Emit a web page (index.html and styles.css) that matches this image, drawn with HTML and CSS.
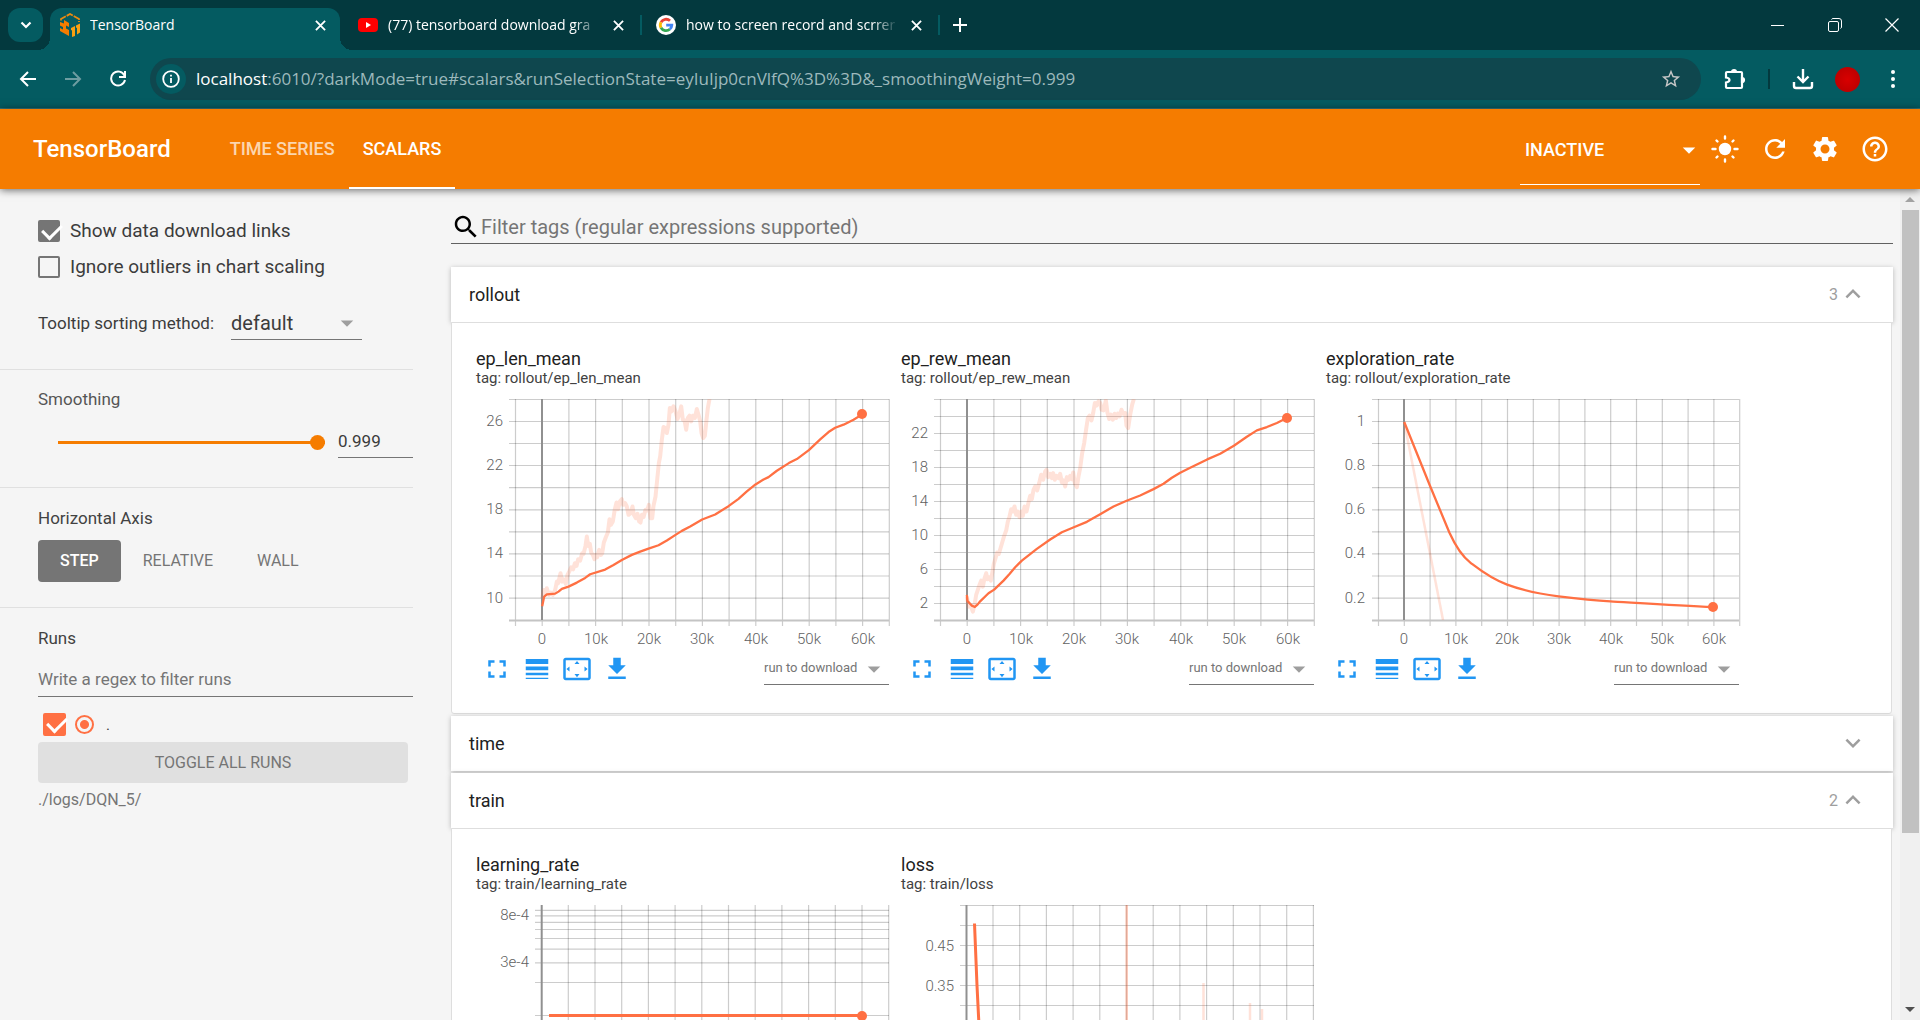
FILE: index.html
```html
<!DOCTYPE html>
<html lang="en">
<head>
<meta charset="utf-8">
<title>TensorBoard</title>
<link rel="stylesheet" href="styles.css">
</head>
<body>
<svg class="defs" aria-hidden="true">
  <symbol id="i-close" viewBox="0 0 12 12"><path d="M1 1l10 10M11 1L1 11" fill="none" stroke="currentColor" stroke-width="2"/></symbol>
  <symbol id="i-full" viewBox="0 0 24 24"><path d="M7 14H5v5h5v-2H7v-3zm-2-4h2V7h3V5H5v5zm12 7h-3v2h5v-5h-2v3zM14 5v2h3v3h2V5h-5z"/></symbol>
  <symbol id="i-weight" viewBox="0 0 24 24"><path d="M3 17h18v-2H3v2zm0 3h18v-1H3v1zm0-7h18v-3H3v3zm0-9v4h18V4H3z"/></symbol>
  <symbol id="i-fit" viewBox="0 0 24 24"><path d="M12.010 5.500L10 8h4l-1.990-2.500zM18 10v4l2.500-1.990L18 10zM6 10l-2.500 2.010L6 14v-4zm8 6h-4l2.010 2.500L14 16zm7-13H3c-1.100 0-2 .9-2 2v14c0 1.100.9 2 2 2h18c1.100 0 2-.9 2-2V5c0-1.100-.9-2-2-2zm0 16.010H3V4.990h18v14.020z"/></symbol>
  <symbol id="i-get" viewBox="0 0 24 24"><path d="M19 9h-4V3H9v6H5l7 7 7-7zM5 18v2h14v-2H5z"/></symbol>
  <symbol id="i-more" viewBox="0 0 24 24"><path d="M16.590 8.590L12 13.170 7.410 8.590 6 10l6 6 6-6z"/></symbol>
  <symbol id="i-less" viewBox="0 0 24 24"><path d="M12 8l-6 6 1.410 1.410L12 10.830l4.590 4.580L18 14z"/></symbol>
  <symbol id="i-drop" viewBox="0 0 24 24"><path d="M7 10l5 5 5-5z"/></symbol>
</svg>

<div class="tabstrip">
  <button class="tab-search" aria-label="Search tabs"><svg width="12" height="8" viewBox="0 0 12 8"><path d="M1.500 1.500L6 6l4.500-4.500" fill="none" stroke="currentColor" stroke-width="2.200"/></svg></button>
  <div class="tab active">
    <svg width="20" height="24" viewBox="0 0 20 24"><path d="M1 7.500v-1.500L10 1l9 5v3" fill="none" stroke="#e98a10" stroke-width="1.800" stroke-dasharray="7 1"/><path d="M0 9l4 1.500V7l5 3v4l-3-1.500v3l3 1.500v6l-9-5v-3l3 1.500V14l-3-1.500z" fill="#f57c00"/><path d="M11 15l4-2v10l-3 1v-7l-1 .5zM16 12.500l4-2v9l-3 2v-7l-1 .5z" fill="#f9a011"/></svg>
    <span class="tab-title">TensorBoard</span>
    <button class="tab-x" aria-label="Close tab"><svg width="11" height="11"><use href="#i-close"/></svg></button>
  </div>
  <div class="tab">
    <svg width="20" height="20" viewBox="0 0 20 20"><rect y="3" width="20" height="14" rx="4" fill="#f00"/><path d="M8 7l5 3-5 3z" fill="#fff"/></svg>
    <span class="tab-title fade">(77) tensorboard download gra</span>
    <button class="tab-x" aria-label="Close tab"><svg width="11" height="11"><use href="#i-close"/></svg></button>
  </div>
  <span class="tab-sep"></span>
  <div class="tab last">
    <svg width="20" height="20" viewBox="0 0 20 20"><circle cx="10" cy="10" r="10" fill="#fff"/><g fill="none" stroke-width="2.800"><path d="M14 5.800A5.800 5.800 0 0 0 5 7.200" stroke="#ea4335"/><path d="M5 7.200a5.800 5.800 0 0 0 0 5.600" stroke="#fbbc05"/><path d="M5 12.800a5.800 5.800 0 0 0 8.800 1.500" stroke="#34a853"/><path d="M13.800 14.300a5.800 5.800 0 0 0 2-4.100H10.200" stroke="#4285f4"/></g></svg>
    <span class="tab-title fade">how to screen record and scrrer</span>
    <button class="tab-x" aria-label="Close tab"><svg width="11" height="11"><use href="#i-close"/></svg></button>
  </div>
  <span class="tab-sep"></span>
  <button class="new-tab" aria-label="New tab"><svg width="14" height="14" viewBox="0 0 14 14"><path d="M7 0v14M0 7h14" stroke="currentColor" stroke-width="2"/></svg></button>
  <div class="window-controls">
    <button aria-label="Minimize"><svg width="14" height="14" viewBox="0 0 14 14"><path d="M0 7.500h13" stroke="currentColor"/></svg></button>
    <button aria-label="Restore"><svg width="14" height="14" viewBox="0 0 14 14" fill="none" stroke="currentColor"><rect x=".5" y="3.500" width="10" height="10" rx="1.500"/><path d="M3.500 1.500q.5-1 1.500-1h6q2.500 0 2.500 2.500v6q0 1-1 1.500"/></svg></button>
    <button aria-label="Close"><svg width="14" height="14" viewBox="0 0 14 14"><path d="M.5.500l13 13M13.500.500l-13 13" stroke="currentColor" stroke-width="1.200"/></svg></button>
  </div>
</div>

<div class="toolbar">
  <button aria-label="Back"><svg width="18" height="18" viewBox="0 0 18 18" fill="none" stroke="currentColor" stroke-width="2"><path d="M17 9H2.500M9 2L2 9l7 7"/></svg></button>
  <button class="dim" aria-label="Forward"><svg width="18" height="18" viewBox="0 0 18 18" fill="none" stroke="currentColor" stroke-width="2"><path d="M1 9h14.500M9 2l7 7-7 7"/></svg></button>
  <button aria-label="Reload"><svg width="18" height="18" viewBox="0 0 18 18" fill="none" stroke="currentColor" stroke-width="2"><path d="M15.500 5.500A7 7 0 1 0 16 10M16 1v6h-6"/></svg></button>
  <div class="omnibox">
    <button class="site-info" aria-label="Site information"><svg width="18" height="18" viewBox="0 0 18 18" fill="none" stroke="currentColor" stroke-width="1.800"><circle cx="9" cy="9" r="7.800"/><path d="M9 8v5M9 4.800v1.800"/></svg></button>
    <span class="url"><b>localhost</b>:6010/?darkMode=true#scalars&amp;runSelectionState=eyIuIjp0cnVlfQ%3D%3D&amp;_smoothingWeight=0.999</span>
    <button class="star" aria-label="Bookmark"><svg width="22" height="22" viewBox="0 0 24 24"><path fill="currentColor" d="M22 9.240l-7.190-.62L12 2 9.190 8.630 2 9.240l5.460 4.730L5.820 21 12 17.270 18.180 21l-1.630-7.030L22 9.240zM12 15.400l-3.760 2.270 1-4.280-3.320-2.880 4.380-.38L12 6.100l1.710 4.040 4.380.38-3.320 2.880 1 4.280L12 15.400z"/></svg></button>
  </div>
  <div class="toolbar-end">
    <button aria-label="Extensions"><svg width="22" height="22" viewBox="0 0 22 22" fill="none" stroke="currentColor" stroke-width="2.200"><path d="M2 5q0-1 1-1h14q1 0 1 1v14q0 1-1 1H3q-1 0-1-1v-4.500q3.500-.5 3.500-2.500T2 9.500z"/><path d="M8 4a2 2 0 0 1 4 0zM18 10a2 2 0 0 1 0 4z" fill="currentColor"/></svg></button>
    <span class="bar-sep"></span>
    <button aria-label="Downloads"><svg width="22" height="22" viewBox="0 0 22 22" fill="none" stroke="currentColor" stroke-width="2.400"><path d="M11 1v13M5.500 8.500L11 14l5.500-5.500M2 14v4q0 2 2 2h14q2 0 2-2v-4"/></svg></button>
    <button class="profile" aria-label="Profile"></button>
    <button aria-label="Menu"><svg width="4" height="20" viewBox="0 0 4 20" fill="currentColor"><circle cx="2" cy="3" r="2"/><circle cx="2" cy="10" r="2"/><circle cx="2" cy="17" r="2"/></svg></button>
  </div>
</div>

<header class="app-header">
  <h1>TensorBoard</h1>
  <nav>
    <a href="#timeseries">TIME SERIES</a>
    <a href="#scalars" class="current">SCALARS</a>
  </nav>
  <div class="plugin-select">
    <select aria-label="Inactive plugins"><option>INACTIVE</option></select>
    <svg width="30" height="30"><use href="#i-drop"/></svg>
  </div>
  <div class="header-actions">
    <button aria-label="Theme"><svg width="28" height="28" viewBox="0 0 28 28" fill="currentColor" stroke="currentColor" stroke-width="2.400" stroke-linecap="round"><circle cx="14" cy="14" r="5"/><path d="M14 1.500v2M14 24.500v2M1.500 14h3M23.500 14h3M5.500 5.500l1 1M21.500 21.500l1 1M22.500 5.500l-1 1M6.500 21.500l-1 1"/></svg></button>
    <button aria-label="Reload data"><svg width="30" height="30" viewBox="0 0 24 24" fill="currentColor"><path d="M17.650 6.350C16.200 4.900 14.210 4 12 4c-4.420 0-7.990 3.580-7.990 8s3.570 8 7.990 8c3.730 0 6.840-2.550 7.730-6h-2.080c-.82 2.330-3.040 4-5.650 4-3.310 0-6-2.690-6-6s2.690-6 6-6c1.660 0 3.140.69 4.220 1.780L13 11h7V4l-2.350 2.350z"/></svg></button>
    <button aria-label="Settings"><svg width="30" height="30" viewBox="0 0 24 24" fill="currentColor"><path d="M19.140 12.940c.04-.3.06-.61.06-.94 0-.32-.02-.64-.07-.94l2.030-1.580c.18-.14.23-.41.12-.61l-1.920-3.320c-.12-.22-.37-.29-.59-.22l-2.390.96c-.5-.38-1.030-.7-1.620-.94l-.36-2.540c-.04-.24-.24-.41-.48-.41h-3.840c-.24 0-.43.17-.47.41l-.36 2.540c-.59.24-1.130.57-1.620.94l-2.390-.96c-.22-.08-.47 0-.59.22L2.740 8.870c-.12.21-.08.47.12.61l2.030 1.580c-.05.3-.09.63-.09.94s.02.64.07.94l-2.030 1.580c-.18.14-.23.41-.12.61l1.920 3.320c.12.22.37.29.59.22l2.390-.96c.5.38 1.030.7 1.620.94l.36 2.540c.05.24.24.41.48.41h3.840c.24 0 .44-.17.47-.41l.36-2.540c.59-.24 1.130-.56 1.620-.94l2.390.96c.22.08.47 0 .59-.22l1.920-3.320c.12-.22.07-.47-.12-.61l-2.010-1.580zM12 15.600c-1.980 0-3.600-1.620-3.600-3.600s1.620-3.600 3.600-3.600 3.600 1.620 3.600 3.600-1.620 3.600-3.600 3.600z"/></svg></button>
    <button aria-label="Help"><svg width="30" height="30" viewBox="0 0 24 24" fill="currentColor"><path d="M11 18h2v-2h-2v2zm1-16C6.480 2 2 6.480 2 12s4.480 10 10 10 10-4.480 10-10S17.520 2 12 2zm0 18c-4.410 0-8-3.590-8-8s3.590-8 8-8 8 3.590 8 8-3.590 8-8 8zm0-14c-2.210 0-4 1.790-4 4h2c0-1.100.9-2 2-2s2 .9 2 2c0 2-3 1.750-3 5h2c0-2.250 3-2.500 3-5 0-2.210-1.790-4-4-4z"/></svg></button>
  </div>
</header>

<div class="workspace">
  <aside class="sidebar">
    <section class="options">
      <label class="check-row"><input type="checkbox" class="check" checked>Show data download links</label>
      <label class="check-row"><input type="checkbox" class="check">Ignore outliers in chart scaling</label>
      <div class="tooltip-row">
        <label for="sorting">Tooltip sorting method:</label>
        <div class="underline-select">
          <select id="sorting"><option>default</option></select>
          <svg width="30" height="30"><use href="#i-drop"/></svg>
        </div>
      </div>
    </section>
    <section class="smoothing">
      <label for="smooth">Smoothing</label>
      <div class="smooth-row">
        <input type="range" id="smooth" min="0" max="999" value="999">
        <input type="text" class="smooth-value" aria-label="Smoothing value" value="0.999">
      </div>
    </section>
    <section class="axis">
      <h3>Horizontal Axis</h3>
      <div class="axis-buttons">
        <button class="on">STEP</button><button>RELATIVE</button><button>WALL</button>
      </div>
    </section>
    <section class="runs">
      <h3>Runs</h3>
      <input type="text" class="regex" aria-label="Filter runs" placeholder="Write a regex to filter runs">
      <div class="run-row">
        <input type="checkbox" class="check run" id="run-root" checked>
        <input type="radio" class="run-only" aria-label="Only this run" checked>
        <label for="run-root">.</label>
      </div>
      <button class="toggle">TOGGLE ALL RUNS</button>
      <p>./logs/DQN_5/</p>
    </section>
  </aside>

  <main>
    <div class="tag-filter">
      <svg width="30" height="30" viewBox="0 0 24 24"><path d="M15.500 14h-.79l-.28-.27C15.410 12.590 16 11.110 16 9.500 16 5.910 13.090 3 9.500 3S3 5.910 3 9.500 5.910 16 9.500 16c1.610 0 3.090-.59 4.230-1.570l.27.28v.79l5 4.990L20.490 19l-4.990-5zm-6 0C7.010 14 5 11.990 5 9.500S7.010 5 9.500 5 14 7.010 14 9.500 11.990 14 9.500 14z"/></svg>
      <input type="text" aria-label="Filter tags" placeholder="Filter tags (regular expressions supported)">
    </div>

    <section class="group">
      <button class="group-head"><span>rollout</span><span class="count">3</span><svg width="30" height="30"><use href="#i-less"/></svg></button>
      <div class="group-body">
        <article class="card">
          <h2>ep_len_mean</h2>
          <p>tag: rollout/ep_len_mean</p>
          <svg class="chart" width="414" height="252" viewBox="0 0 414 252">
            <path class="grid" d="M39.500 0v227m26.700-227v227m26.700-227v227m26.700-227v227m26.700-227v227m26.700-227v227m26.700-227v227m26.700-227v227m26.700-227v227m26.700-227v227m26.700-227v227m26.700-227v227m26.700-227v227m26.700-227v227m26.700-227v227"/>
            <path class="grid" d="M33 .5h380m-380 22h380m-380 22h380m-380 22h380m-380 22.200h380m-380 22.100h380m-380 22.100h380m-380 22h380m-380 22.100h380m-380 22.100h380"/>
            <path class="base" d="M33 221.500h380"/>
            <path class="zero" d="M66 0v221"/>
            <svg x="39.500" y="0" width="373.700" height="221" viewBox="226 178 1121 662" preserveAspectRatio="none">
              <polyline class="raw noisy" points="306,775 311,750 315,762 320,745 326,765 332,758 338,765 345,750 350,725 354,730 361,700 366,725 371,718 377,732 382,705 387,695 393,682 399,688 404,670 409,678 414,658 420,662 426,640 430,642 436,618 440,590 444,618 449,612 453,638 458,645 463,658 467,645 471,652 477,630 482,645 486,640 491,608 497,592 503,578 508,538 512,555 518,545 524,508 529,488 534,508 539,485 545,478 549,495 555,490 560,500 565,525 571,520 577,500 581,525 587,535 592,522 597,545 601,548 605,525 610,532 616,510 621,512 626,495 631,535 636,535 640,498 646,470 650,430 656,370 660,350 665,300 670,262 675,265 680,280 685,255 689,205 694,215 700,200 706,215 712,238 718,222 723,200 728,240 733,242 738,270 743,235 748,228 753,245 758,228 764,235 770,208 775,225 780,245 784,280 789,295 794,288 799,240 803,205 808,178"/>
              <polyline class="line" points="306,799 312,770 320,763 345,761 355,755 365,747 385,740 410,728 435,714 450,703 495,689 520,675 545,660 575,645 600,635 625,626 655,616 680,602 706,585 725,573 750,560 786,539 825,524 865,499 895,477 920,455 946,434 970,419 985,412 1010,393 1046,370 1070,358 1106,331 1140,299 1165,277 1185,264 1210,255 1240,240 1266,224"/>
            </svg>
            <circle class="dot" cx="386" cy="15" r="5"/>
            <g class="y"><text x="27" y="27">26</text><text x="27" y="71">22</text><text x="27" y="115">18</text><text x="27" y="159">14</text><text x="27" y="204">10</text></g>
            <g class="x"><text x="66" y="245">0</text><text x="120" y="245">10k</text><text x="173" y="245">20k</text><text x="226" y="245">30k</text><text x="280" y="245">40k</text><text x="333" y="245">50k</text><text x="387" y="245">60k</text></g>
          </svg>
          <div class="card-tools">
            <button aria-label="Toggle size"><svg width="30" height="30"><use href="#i-full"/></svg></button>
            <button aria-label="Toggle log axis"><svg width="30" height="30"><use href="#i-weight"/></svg></button>
            <button aria-label="Fit domain"><svg width="30" height="30"><use href="#i-fit"/></svg></button>
            <button aria-label="Download"><svg width="30" height="30"><use href="#i-get"/></svg></button>
            <div class="underline-select small"><select aria-label="Run to download"><option>run to download</option></select><svg width="30" height="30"><use href="#i-drop"/></svg></div>
          </div>
        </article>

        <article class="card">
          <h2>ep_rew_mean</h2>
          <p>tag: rollout/ep_rew_mean</p>
          <svg class="chart" width="414" height="252" viewBox="0 0 414 252">
            <path class="grid" d="M39.500 0v227m26.700-227v227m26.700-227v227m26.700-227v227m26.700-227v227m26.700-227v227m26.700-227v227m26.700-227v227m26.700-227v227m26.700-227v227m26.700-227v227m26.700-227v227m26.700-227v227m26.700-227v227m26.700-227v227"/>
            <path class="grid" d="M33 .5h380m-380 17h380m-380 17h380m-380 17h380m-380 17h380m-380 17h380m-380 17h380m-380 17h380m-380 17h380m-380 17h380m-380 17h380m-380 17h380m-380 17h380"/>
            <path class="base" d="M33 221.500h380"/>
            <path class="zero" d="M66 0v221"/>
            <svg x="39.500" y="0" width="373.700" height="221" viewBox="211 178 1121 662" preserveAspectRatio="none">
              <polyline class="raw noisy" points="290,770 296,800 302,798 308,815 313,795 318,765 323,750 328,735 333,722 338,740 343,715 348,700 352,718 358,712 362,722 367,695 371,672 376,655 381,638 386,642 391,625 397,605 402,588 408,572 413,545 418,530 423,508 428,515 433,500 438,525 443,515 448,532 454,515 458,528 463,500 469,515 475,488 480,468 485,478 490,450 495,440 501,452 507,430 513,405 519,420 525,395 529,390 534,412 540,402 545,415 549,400 554,420 559,408 565,415 570,402 575,428 580,422 585,440 590,412 595,420 600,408 605,418 609,398 614,430 620,442 625,410 630,385 636,340 642,310 648,268 653,235 658,228 664,242 669,220 674,190 679,198 685,185 690,190 694,210 700,212 707,182 712,220 717,238 722,225 728,240 733,222 738,235 743,222 748,230 754,210 759,222 765,220 769,258 774,265 780,225 786,195 791,178"/>
              <polyline class="line" points="290,765 292,783 305,797 314,801 322,794 330,784 355,760 372,749 400,722 418,702 435,682 455,662 500,627 540,599 575,577 611,562 650,546 690,523 730,500 771,482 810,467 850,448 880,432 905,414 930,399 960,384 1011,359 1050,342 1091,318 1130,291 1160,272 1190,262 1220,250 1250,235"/>
            </svg>
            <circle class="dot" cx="386" cy="19" r="5"/>
            <g class="y"><text x="27" y="39">22</text><text x="27" y="73">18</text><text x="27" y="107">14</text><text x="27" y="141">10</text><text x="27" y="175">6</text><text x="27" y="209">2</text></g>
            <g class="x"><text x="66" y="245">0</text><text x="120" y="245">10k</text><text x="173" y="245">20k</text><text x="226" y="245">30k</text><text x="280" y="245">40k</text><text x="333" y="245">50k</text><text x="387" y="245">60k</text></g>
          </svg>
          <div class="card-tools">
            <button aria-label="Toggle size"><svg width="30" height="30"><use href="#i-full"/></svg></button>
            <button aria-label="Toggle log axis"><svg width="30" height="30"><use href="#i-weight"/></svg></button>
            <button aria-label="Fit domain"><svg width="30" height="30"><use href="#i-fit"/></svg></button>
            <button aria-label="Download"><svg width="30" height="30"><use href="#i-get"/></svg></button>
            <div class="underline-select small"><select aria-label="Run to download"><option>run to download</option></select><svg width="30" height="30"><use href="#i-drop"/></svg></div>
          </div>
        </article>

        <article class="card">
          <h2>exploration_rate</h2>
          <p>tag: rollout/exploration_rate</p>
          <svg class="chart" width="414" height="252" viewBox="0 0 414 252">
            <path class="grid" d="M52.500 0v227m25.800-227v227m25.800-227v227m25.800-227v227m25.800-227v227m25.800-227v227m25.800-227v227m25.800-227v227m25.800-227v227m25.800-227v227m25.800-227v227m25.800-227v227m25.800-227v227m25.800-227v227m25.800-227v227"/>
            <path class="grid" d="M46 .5h367m-367 22h367m-367 22h367m-367 22h367m-367 22.200h367m-367 22.100h367m-367 22.100h367m-367 22h367m-367 22.100h367m-367 22.100h367"/>
            <path class="base" d="M46 221.500h367"/>
            <path class="zero" d="M78 0v221"/>
            <svg x="52.500" y="0" width="361" height="221" viewBox="198 178 912 662" preserveAspectRatio="none">
              <path class="raw" d="M263 247L361 840"/>
              <path class="line" d="M263 247L327 435 377 578C395 625 410 650 430 668S480 715 523 734 620 764 653 769C700 776 750 782 784 784S950 797 1044 801"/>
            </svg>
            <circle class="dot" cx="387" cy="208" r="5"/>
            <g class="y"><text x="39" y="27">1</text><text x="39" y="71">0.8</text><text x="39" y="115">0.6</text><text x="39" y="159">0.4</text><text x="39" y="204">0.2</text></g>
            <g class="x"><text x="78" y="245">0</text><text x="130" y="245">10k</text><text x="181" y="245">20k</text><text x="233" y="245">30k</text><text x="285" y="245">40k</text><text x="336" y="245">50k</text><text x="388" y="245">60k</text></g>
          </svg>
          <div class="card-tools">
            <button aria-label="Toggle size"><svg width="30" height="30"><use href="#i-full"/></svg></button>
            <button aria-label="Toggle log axis"><svg width="30" height="30"><use href="#i-weight"/></svg></button>
            <button aria-label="Fit domain"><svg width="30" height="30"><use href="#i-fit"/></svg></button>
            <button aria-label="Download"><svg width="30" height="30"><use href="#i-get"/></svg></button>
            <div class="underline-select small"><select aria-label="Run to download"><option>run to download</option></select><svg width="30" height="30"><use href="#i-drop"/></svg></div>
          </div>
        </article>
      </div>
    </section>

    <section class="group">
      <button class="group-head"><span>time</span><span class="count"></span><svg width="30" height="30"><use href="#i-more"/></svg></button>
    </section>

    <section class="group">
      <button class="group-head"><span>train</span><span class="count">2</span><svg width="30" height="30"><use href="#i-less"/></svg></button>
      <div class="group-body">
        <article class="card">
          <h2>learning_rate</h2>
          <p>tag: train/learning_rate</p>
          <svg class="chart" width="414" height="252" viewBox="0 0 414 252">
            <path class="grid" d="M92.300 0v227m26.700-227v227m26.700-227v227m26.700-227v227m26.700-227v227m26.700-227v227m26.700-227v227m26.700-227v227m26.700-227v227m26.700-227v227m26.700-227v227m26.700-227v227m26.700-227v227"/>
            <path class="grid" d="M59 5.300h354m-354 5.500h354m-354 6.500h354m-354 7.200h354m-354 9h354m-354 10.700h354m-354 13.600h354m-354 19.700h354m-354 33h354"/>
            <path class="zero" d="M65.700 0v221"/>
            <path class="line thick" d="M73 110.500h313"/>
            <circle class="dot" cx="386" cy="111" r="5"/>
            <g class="y"><text x="53" y="15">8e-4</text><text x="53" y="62">3e-4</text></g>
          </svg>
        </article>

        <article class="card">
          <h2>loss</h2>
          <p>tag: train/loss</p>
          <svg class="chart" width="414" height="252" viewBox="0 0 414 252">
            <path class="grid" d="M92 0v227m26.700-227v227m26.700-227v227m26.700-227v227m26.700-227v227m26.700-227v227m26.700-227v227m26.700-227v227m26.700-227v227m26.700-227v227m26.700-227v227m26.700-227v227m26.700-227v227"/>
            <path class="grid" d="M59 .5h354m-354 20h354m-354 20h354m-354 20h354m-354 20h354m-354 20h354m-354 20h354"/>
            <path class="zero" d="M65.500 0v221"/>
            <path class="raw" d="M225.700 0v221M302.500 78v140M349 98v120M361 104v120"/>
            <path class="raw" d="M225.700 0v221"/>
            <path class="line thick" d="M73.500 18.500l2.500 62 3 60"/>
            <g class="y"><text x="53" y="46">0.45</text><text x="53" y="86">0.35</text><text x="53" y="126">0.25</text></g>
          </svg>
        </article>
      </div>
    </section>
  </main>

  <div class="scrollbar" aria-hidden="true">
    <svg width="10" height="5" viewBox="0 0 10 5"><path d="M0 5l5-5 5 5z" fill="#a3a3a3"/></svg>
    <span class="track"><span class="thumb"></span></span>
    <svg width="10" height="5" viewBox="0 0 10 5"><path d="M0 0l5 5 5-5z" fill="#505050"/></svg>
  </div>
</div>
</body>
</html>
```
FILE: styles.css
```css
* { box-sizing: border-box; }
body {
  margin: 0;
  height: 100vh;
  display: flex;
  flex-direction: column;
  overflow: hidden;
  background: #f5f5f5;
  color: #212121;
  font-family: Roboto, sans-serif;
}
h1, h2, h3, p { margin: 0; font-weight: 400; }
button, input, select { font: inherit; color: inherit; border: 0; padding: 0; margin: 0; background: none; border-radius: 0; outline: 0; }
button { display: flex; align-items: center; justify-content: center; }
select { appearance: none; }
svg { display: block; flex: none; }
.defs { position: absolute; width: 0; height: 0; }

/* browser tabs */
.tabstrip {
  flex: none;
  display: flex;
  align-items: center;
  height: 50px;
  padding-left: 8px;
  background: #03393e;
  color: #fff;
  font-family: "Open Sans", sans-serif;
  font-size: 14px;
}
.tab-search { width: 35px; height: 34px; margin-right: 7px; border-radius: 12px; background: #045b61; }
.tab { display: flex; align-items: center; gap: 10px; width: 290px; height: 42px; padding: 0 4px 8px 18px; align-self: flex-end; }
.tab.active { position: relative; padding: 0 12px 8px 10px; border-radius: 12px 12px 0 0; background: #045b61; }
.tab.active::before, .tab.active::after { content: ""; position: absolute; bottom: 0; width: 12px; height: 12px; }
.tab.active::before { left: -12px; background: radial-gradient(circle at 0 0, transparent 12px, #045b61 12px); }
.tab.active::after { right: -12px; background: radial-gradient(circle at 100% 0, transparent 12px, #045b61 12px); }
.tab.last { width: 286px; padding-left: 14px; }
.tab-title { flex: 1; min-width: 0; overflow: hidden; white-space: nowrap; line-height: 20px; }
.fade { -webkit-mask-image: linear-gradient(to right, #000 88%, transparent); mask-image: linear-gradient(to right, #000 88%, transparent); }
.tab-x { width: 16px; height: 16px; }
.tab-sep { width: 2px; height: 20px; background: #045b61; margin-left: 10px; }
.new-tab { width: 40px; height: 34px; }
.window-controls { display: flex; margin-left: auto; }
.window-controls button { width: 57px; height: 50px; }

/* browser toolbar */
.toolbar {
  flex: none;
  display: flex;
  align-items: center;
  height: 59px;
  padding: 0 14px 0 5px;
  background: #045b61;
  border-bottom: 1px solid #397579;
  color: #fff;
}
.toolbar > button { width: 45px; height: 40px; }
.toolbar .dim { color: #6e9da1; }
.omnibox { flex: 1; min-width: 0; display: flex; align-items: center; height: 42px; margin-left: 10px; padding: 0 19px 0 6px; border-radius: 21px; background: #0f474e; }
.site-info { width: 30px; height: 30px; border-radius: 50%; background: #045b61; }
.url { flex: 1; min-width: 0; overflow: hidden; white-space: nowrap; margin-left: 10px; font: 17px/24px "Open Sans", sans-serif; color: #9db9bc; }
.url b { font-weight: 400; color: #fff; }
.star { color: #c7c7c7; }
.toolbar-end { display: flex; align-items: center; margin-left: 23px; }
.bar-sep { width: 2px; height: 20px; margin: 0 22px; background: #03393e; }
.profile { width: 25px; height: 25px; margin: 0 20px 0 21px; border-radius: 50%; background: radial-gradient(#d80000, #b40000); }
.toolbar-end button:last-child { width: 26px; }

/* app header */
.app-header {
  position: relative;
  z-index: 2;
  flex: none;
  display: flex;
  align-items: center;
  height: 80px;
  padding: 0 20px 0 33px;
  background: #f57c00;
  color: #fff;
  box-shadow: 0 1px 8px rgba(0, 0, 0, .6);
}
.app-header h1 { font-size: 24px; font-weight: 500; line-height: 32px; }
.app-header nav { display: flex; align-self: stretch; margin-left: 45px; }
.app-header nav a { display: flex; align-items: center; padding: 0 14px; border-bottom: 2px solid transparent; color: rgba(255, 255, 255, .7); font-size: 18px; font-weight: 500; text-decoration: none; }
.app-header nav a.current { color: #fff; border-color: #fff; }
.plugin-select { display: flex; align-items: center; width: 180px; height: 70px; margin-left: auto; padding-left: 5px; border-bottom: 1px solid #fff; align-self: flex-start; margin-top: 6px; }
.plugin-select select { flex: 1; font-size: 18px; font-weight: 500; }
.plugin-select svg, .underline-select svg { fill: currentColor; pointer-events: none; }
.plugin-select svg { margin-right: -4px; }
.header-actions { display: flex; }
.header-actions button { width: 50px; height: 50px; }

.workspace { flex: 1; min-height: 0; display: flex; }

/* sidebar */
.sidebar { flex: none; width: 413px; color: #3c3c3c; font-size: 17px; line-height: 24px; }
.sidebar section { padding-left: 38px; border-bottom: 1px solid #e0e0e0; }
.sidebar section:last-child { border-bottom: 0; }
.sidebar h3 { font-size: 17px; color: #424242; }
.check-row { display: flex; align-items: center; gap: 10px; height: 36px; font-size: 19px; }
.check { appearance: none; position: relative; flex: none; width: 22px; height: 22px; border: 2px solid #757575; border-radius: 2px; }
.check:checked { background: #757575; }
.check:checked::after { content: ""; position: absolute; left: 6px; top: -2px; width: 9px; height: 16px; border: solid #fff; border-width: 0 3px 3px 0; transform: rotate(45deg); }
.options { height: 181px; padding-top: 24px; }
.tooltip-row { display: flex; align-items: center; gap: 17px; height: 40px; margin-top: 18px; }
.underline-select { display: flex; align-items: center; width: 131px; height: 34px; border-bottom: 1px solid #757575; }
.underline-select select { flex: 1; min-width: 0; font-size: 20px; }
.underline-select svg { color: #9e9e9e; }
.smoothing { height: 118px; padding-top: 17px; }
.smoothing label { display: block; color: #555; }
.smooth-row { display: flex; align-items: center; gap: 13px; height: 32px; margin-top: 15px; padding-left: 20px; }
.smooth-row input[type=range] { appearance: none; flex: 1; min-width: 0; height: 15px; background: linear-gradient(#f57c00, #f57c00) center / 100% 3px no-repeat; }
.smooth-row input::-webkit-slider-thumb { appearance: none; width: 15px; height: 15px; border-radius: 50%; background: #f57c00; }
.smooth-value { width: 75px; height: 32px; padding-bottom: 2px; border-bottom: 1px solid #757575; }
.axis { height: 120px; padding-top: 18px; }
.axis-buttons { display: flex; margin-top: 10px; }
.axis-buttons button { height: 42px; padding: 0 22px; border-radius: 4px; color: #757575; font-size: 16px; }
.axis-buttons .on { background: #757575; color: #fff; font-weight: 500; }
.runs { padding-top: 18px; }
.regex { display: block; width: 375px; height: 34px; margin-top: 13px; padding-bottom: 2px; border-bottom: 1px solid #757575; }
.regex::placeholder, .tag-filter input::placeholder { color: #757575; opacity: 1; }
.run-row { display: flex; align-items: center; gap: 9px; height: 29px; margin: 13px 0 3px; padding-left: 5px; }
.check.run { border-color: #ff7043; background: #ff7043; width: 23px; height: 23px; }
.run-only { appearance: none; width: 19px; height: 19px; border: 2px solid #ff7043; border-radius: 50%; background: radial-gradient(#ff7043 4px, transparent 5px); }
.run-row label { margin-left: 3px; font-size: 15px; }
.toggle { width: 370px; height: 41px; border-radius: 4px; background: #e0e0e0; color: #757575; font-size: 16px; }
.runs p { margin-top: 5px; color: #757575; font-size: 16px; }

/* main column */
main { flex: 1; min-width: 0; overflow: hidden; padding: 21px 7px 0 38px; }
.tag-filter { display: flex; align-items: center; height: 34px; margin-bottom: 23px; border-bottom: 1px solid #616161; }
.tag-filter input { flex: 1; font-size: 20px; }
.group { margin-bottom: 2px; }
.group-head {
  position: relative;
  width: 100%;
  height: 55px;
  padding: 0 25px 1px 18px;
  background: #fff;
  font-size: 18px;
  box-shadow: 0 1px 5px rgba(0, 0, 0, .25);
}
.group-head svg { fill: #9e9e9e; }
.count { margin-left: auto; font-size: 16px; color: #9e9e9e; }
.group-body { position: relative; display: flex; flex-wrap: wrap; gap: 11px; margin-right: 1px; padding: 26px 24px; background: #fff; border: 1px solid #dedede; border-radius: 0 0 3px 3px; }
.card { width: 414px; }
.card h2 { font-size: 18px; line-height: 20px; }
.card p { font-size: 15px; line-height: 18px; margin-bottom: 12px; color: #424242; }
.chart { overflow: visible; }
.grid { fill: none; stroke: rgba(0, 0, 0, .2); stroke-width: 1.200; }
.base { fill: none; stroke: #c4c4c4; stroke-width: 2; }
.zero { fill: none; stroke: #909090; stroke-width: 2; }
.raw { fill: none; stroke: #ff7043; stroke-opacity: .2; stroke-width: 2.500; stroke-linejoin: round; vector-effect: non-scaling-stroke; }
.raw.noisy { stroke-width: 4; }
.line { fill: none; stroke: #ff7043; stroke-width: 2.300; stroke-linejoin: round; vector-effect: non-scaling-stroke; }
.line.thick { stroke-width: 3; }
.dot { fill: #ff7043; }
.chart text { font-size: 15px; font-weight: 300; fill: #616161; }
.y { text-anchor: end; }
.x { text-anchor: middle; }
.card-tools { display: flex; align-items: center; height: 36px; padding-left: 1px; }
.card-tools button { width: 40px; height: 36px; }
.card-tools button svg { fill: #2196f3; }
.underline-select.small { width: 125px; height: 32px; margin-left: auto; margin-right: 1px; color: #757575; }
.small select { font-size: 13px; padding-bottom: 2px; }

/* page scrollbar */
.scrollbar { flex: none; display: flex; flex-direction: column; align-items: center; width: 20px; padding: 8px 0; background: #f0f0f0; }
.track { flex: 1; width: 17px; margin: 8px 0; }
.thumb { display: block; width: 100%; height: 79%; background: #c1c1c1; }
```
